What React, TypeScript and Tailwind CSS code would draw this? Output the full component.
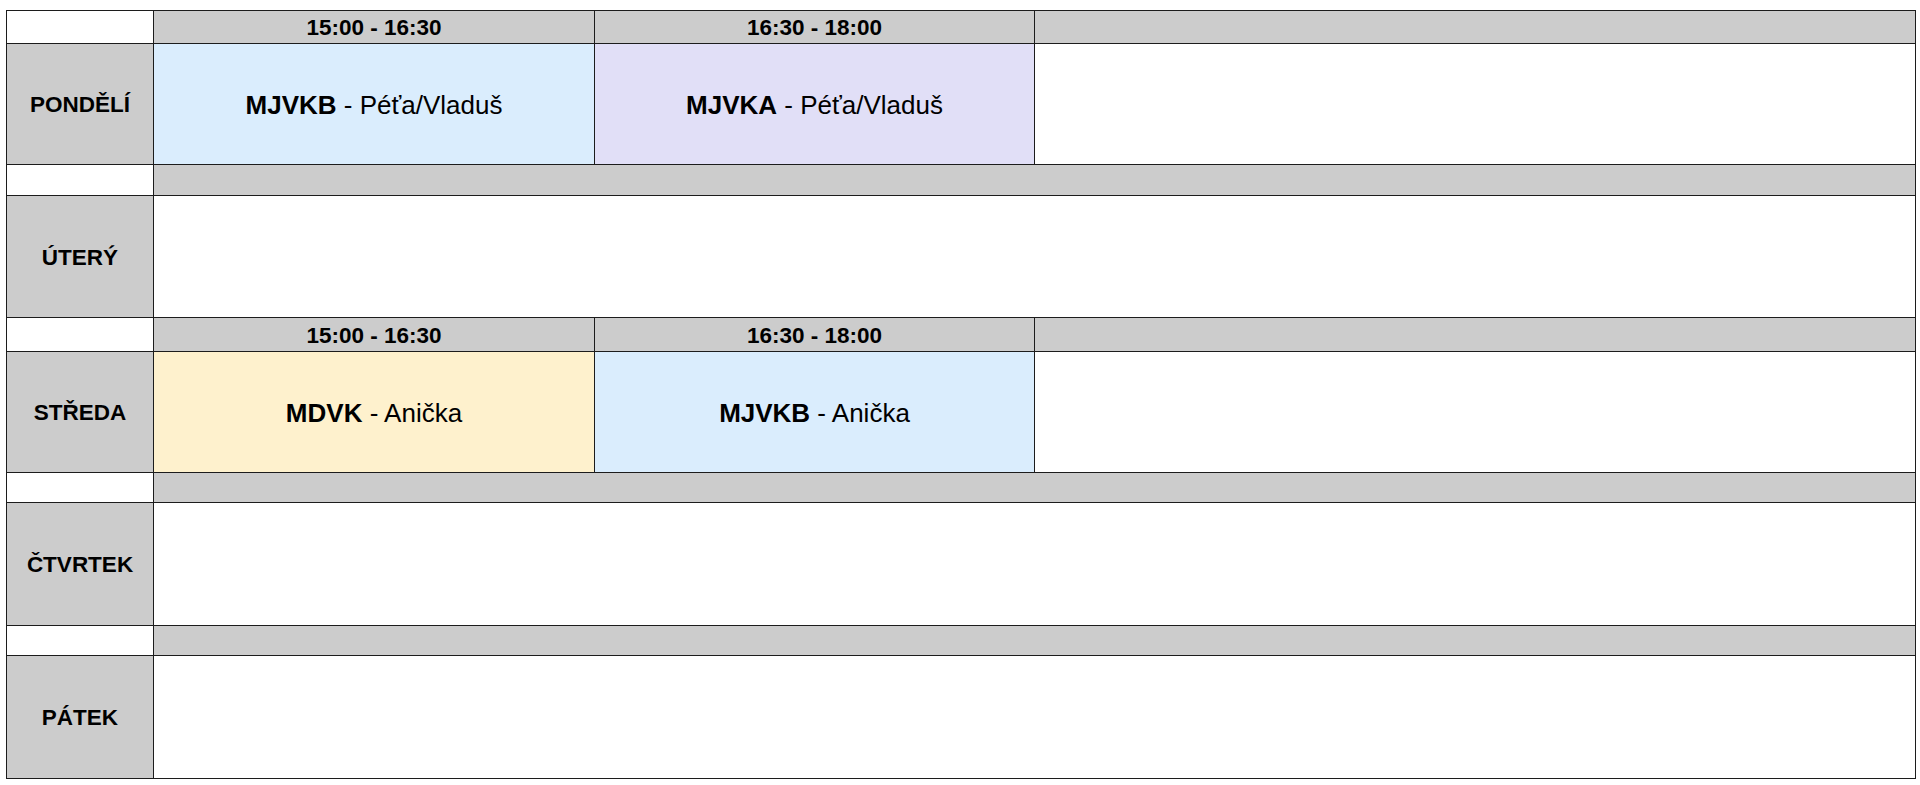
import React from "react";

const font = { fontFamily: '"Liberation Sans", Arial, sans-serif' };

function Cell({ className = "", children }: { className?: string; children?: React.ReactNode }) {
  return (
    <div className={`border-r border-b border-[#1c1c1c] flex items-center justify-center pt-[2px] text-black ${className}`}>
      {children}
    </div>
  );
}

function Entry({ code, who }: { code: string; who: string }) {
  return (
    <span className="text-[26px] leading-none">
      <span className="font-bold">{code}</span> - {who}
    </span>
  );
}

function HeaderRow() {
  return (
    <>
      <Cell className="bg-white" />
      <Cell className="bg-[#cccccc] text-[22.5px] font-bold">15:00 - 16:30</Cell>
      <Cell className="bg-[#cccccc] text-[22.5px] font-bold">16:30 - 18:00</Cell>
      <Cell className="bg-[#cccccc]" />
    </>
  );
}

function SpacerRow() {
  return (
    <>
      <Cell className="bg-white" />
      <Cell className="bg-[#cccccc] col-span-3" />
    </>
  );
}

function Day({ label }: { label: string }) {
  return <Cell className="bg-[#cccccc] text-[22.5px] font-bold">{label}</Cell>;
}

export default function App() {
  return (
    <div className="w-[1920px] h-[785px] bg-white overflow-hidden" style={font}>
      <div className="ml-[6px] mt-[10px] w-[1910px] border-l border-t border-[#1c1c1c] grid grid-cols-[147px_441px_440px_1fr] grid-rows-[33px_121px_31px_122px_34px_121px_30px_123px_30px_123px]">
        <HeaderRow />
        <Day label="PONDĚLÍ" />
        <Cell className="bg-[#daedfd]">
          <Entry code="MJVKB" who="Péťa/Vladuš" />
        </Cell>
        <Cell className="bg-[#e1dff7]">
          <Entry code="MJVKA" who="Péťa/Vladuš" />
        </Cell>
        <Cell className="bg-white" />
        <SpacerRow />
        <Day label="ÚTERÝ" />
        <Cell className="bg-white col-span-3" />
        <HeaderRow />
        <Day label="STŘEDA" />
        <Cell className="bg-[#fef1cd]">
          <Entry code="MDVK" who="Anička" />
        </Cell>
        <Cell className="bg-[#daedfd]">
          <Entry code="MJVKB" who="Anička" />
        </Cell>
        <Cell className="bg-white" />
        <SpacerRow />
        <Day label="ČTVRTEK" />
        <Cell className="bg-white col-span-3" />
        <SpacerRow />
        <Day label="PÁTEK" />
        <Cell className="bg-white col-span-3" />
      </div>
    </div>
  );
}
